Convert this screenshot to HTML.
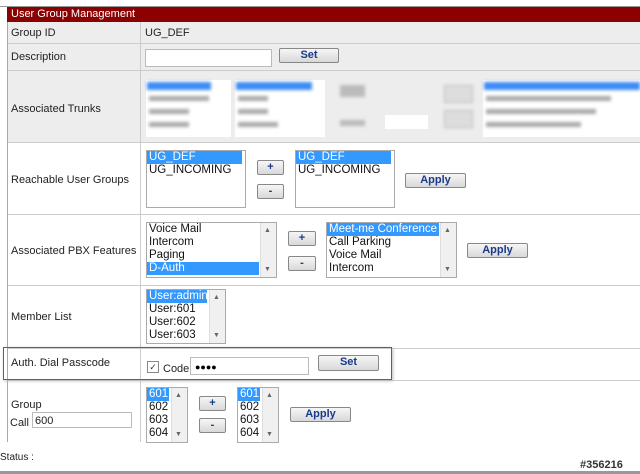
<!DOCTYPE html><html><head><style>
body{margin:0;width:640px;height:474px;background:#fff;font-family:"Liberation Sans",Arial,sans-serif;position:relative;overflow:hidden}
.a{position:absolute}
.t{font-size:11px;color:#222}
.row{position:absolute;left:7px;right:0;border-bottom:1px solid #ccc}
.lb{position:absolute;background:#fff;border:1px solid #aaa;font-size:11.5px;line-height:13px;color:#111;overflow:hidden}
.lb div{padding-left:2px;white-space:nowrap}
.sel{background:#3399ff;color:#fff}
.btn{position:absolute;border:1px solid #888;border-radius:2px;background:linear-gradient(#f6f6f6,#d8d8d8);font-size:11px;font-weight:bold;color:#1a3a8a;text-align:center;line-height:13px}
.sb{position:absolute;top:0;bottom:0;right:0;width:15px;background:#f0f0f0;border-left:1px solid #ddd}
.sb:before{content:"▲";position:absolute;top:1px;left:3px;font-size:7px;color:#666}
.sb:after{content:"▼";position:absolute;bottom:1px;left:3px;font-size:7px;color:#666}
.inp{position:absolute;background:#fff;border:1px solid #bbb}
.bl{position:absolute;filter:blur(1.5px)}
</style></head><body>
<div class="a" style="left:0;top:0;width:640px;height:6px;background:#fff;border-bottom:1px solid #999"></div>
<div class="a" style="left:7px;top:7px;width:633px;height:15px;background:#8b0000"></div>
<div class="a t" style="left:11px;top:8px;color:#fff;font-size:11px">User Group Management</div>
<div class="row" style="top:22px;height:21px;background:#ededed"></div>
<div class="row" style="top:44px;height:26px;background:#ededed"></div>
<div class="row" style="top:71px;height:71px;background:#ededed"></div>
<div class="row" style="top:143px;height:71px"></div>
<div class="row" style="top:215px;height:70px"></div>
<div class="row" style="top:286px;height:62px"></div>
<div class="row" style="top:349px;height:31px"></div>
<div class="a" style="left:7px;top:22px;width:1px;height:420px;background:#aaa"></div>
<div class="a" style="left:140px;top:22px;width:1px;height:420px;background:#ccc"></div>
<div class="a t" style="left:11px;top:27px">Group ID</div>
<div class="a t" style="left:145px;top:27px">UG_DEF</div>
<div class="a t" style="left:11px;top:51px">Description</div>
<div class="inp" style="left:145px;top:49px;width:125px;height:16px"></div>
<div class="btn" style="left:279px;top:48px;width:58px;height:13px">Set</div>
<div class="a t" style="left:11px;top:103px">Associated Trunks</div>
<div class="a" style="left:146px;top:80px;width:85px;height:57px;background:#fff"></div>
<div class="bl" style="left:147px;top:82px;width:64px;height:8px;background:#3d8cf5"></div>
<div class="bl" style="left:149px;top:96px;width:60px;height:5px;background:#aaa"></div>
<div class="bl" style="left:149px;top:109px;width:40px;height:5px;background:#aaa"></div>
<div class="bl" style="left:149px;top:122px;width:40px;height:5px;background:#aaa"></div>
<div class="a" style="left:235px;top:80px;width:90px;height:57px;background:#fff"></div>
<div class="bl" style="left:236px;top:82px;width:76px;height:8px;background:#3d8cf5"></div>
<div class="bl" style="left:238px;top:96px;width:30px;height:5px;background:#aaa"></div>
<div class="bl" style="left:238px;top:109px;width:30px;height:5px;background:#aaa"></div>
<div class="bl" style="left:238px;top:122px;width:40px;height:5px;background:#aaa"></div>
<div class="bl" style="left:340px;top:85px;width:25px;height:12px;background:#bbb"></div>
<div class="bl" style="left:340px;top:120px;width:25px;height:6px;background:#bbb"></div>
<div class="a" style="left:385px;top:115px;width:43px;height:14px;background:#fff"></div>
<div class="bl" style="left:444px;top:85px;width:27px;height:16px;background:#ddd;border:1px solid #bbb"></div>
<div class="bl" style="left:444px;top:110px;width:27px;height:16px;background:#ddd;border:1px solid #bbb"></div>
<div class="a" style="left:483px;top:80px;width:157px;height:57px;background:#fff"></div>
<div class="bl" style="left:484px;top:82px;width:156px;height:8px;background:#3d8cf5"></div>
<div class="bl" style="left:486px;top:96px;width:125px;height:5px;background:#aaa"></div>
<div class="bl" style="left:486px;top:109px;width:110px;height:5px;background:#aaa"></div>
<div class="bl" style="left:486px;top:122px;width:95px;height:5px;background:#aaa"></div>
<div class="a t" style="left:11px;top:174px">Reachable User Groups</div>
<div class="lb" style="left:146px;top:150px;width:98px;height:56px"><div class="sel" style="width:93px">UG_DEF</div><div>UG_INCOMING</div></div>
<div class="btn" style="left:257px;top:160px;width:25px;height:13px">+</div>
<div class="btn" style="left:257px;top:184px;width:25px;height:13px">-</div>
<div class="lb" style="left:295px;top:150px;width:98px;height:56px"><div class="sel" style="width:93px">UG_DEF</div><div>UG_INCOMING</div></div>
<div class="btn" style="left:405px;top:173px;width:59px;height:13px">Apply</div>
<div class="a t" style="left:11px;top:245px">Associated PBX Features</div>
<div class="lb" style="left:146px;top:222px;width:129px;height:54px"><div>Voice Mail</div><div>Intercom</div><div>Paging</div><div class="sel" style="width:110px">D-Auth</div><span class="sb"></span></div>
<div class="btn" style="left:288px;top:231px;width:26px;height:13px">+</div>
<div class="btn" style="left:288px;top:256px;width:26px;height:13px">-</div>
<div class="lb" style="left:326px;top:222px;width:129px;height:54px"><div class="sel" style="width:110px">Meet-me Conference</div><div>Call Parking</div><div>Voice Mail</div><div>Intercom</div><span class="sb"></span></div>
<div class="btn" style="left:467px;top:243px;width:59px;height:13px">Apply</div>
<div class="a t" style="left:11px;top:311px">Member List</div>
<div class="lb" style="left:146px;top:289px;width:78px;height:53px"><div class="sel" style="width:58px">User:admin</div><div>User:601</div><div>User:602</div><div>User:603</div><span class="sb"></span></div>
<div class="a" style="left:3px;top:347px;width:387px;height:31px;border:1px solid #c33;box-shadow:1px 1px 3px #bbb"></div>
<div class="a t" style="left:11px;top:357px">Auth. Dial Passcode</div>
<div class="a" style="left:147px;top:361px;width:10px;height:10px;border:1px solid #888;background:#fff;font-size:9px;line-height:10px;text-align:center;color:#335">✓</div>
<div class="a t" style="left:163px;top:363px">Code</div>
<div class="inp" style="left:190px;top:357px;width:119px;height:18px;font-size:9px;line-height:18px;padding-left:4px;box-sizing:border-box">●●●●</div>
<div class="btn" style="left:318px;top:355px;width:59px;height:14px">Set</div>
<div class="a t" style="left:11px;top:399px">Group</div>
<div class="a t" style="left:10px;top:417px">Call</div>
<div class="inp t" style="left:32px;top:412px;width:100px;height:16px;line-height:16px;padding-left:2px;box-sizing:border-box">600</div>
<div class="lb" style="left:146px;top:387px;width:40px;height:54px"><div class="sel" style="width:20px">601</div><div>602</div><div>603</div><div>604</div><span class="sb"></span></div>
<div class="btn" style="left:199px;top:396px;width:25px;height:13px">+</div>
<div class="btn" style="left:199px;top:418px;width:25px;height:13px">-</div>
<div class="lb" style="left:237px;top:387px;width:40px;height:54px"><div class="sel" style="width:20px">601</div><div>602</div><div>603</div><div>604</div><span class="sb"></span></div>
<div class="btn" style="left:290px;top:407px;width:59px;height:13px">Apply</div>
<div class="a t" style="left:0px;top:452px;font-size:10px">Status :</div>
<div class="a" style="left:580px;top:459px;font-size:11px;font-weight:bold;color:#333">#356216</div>
<div class="a" style="left:0;top:471px;width:640px;height:3px;background:#999"></div>
</body></html>
